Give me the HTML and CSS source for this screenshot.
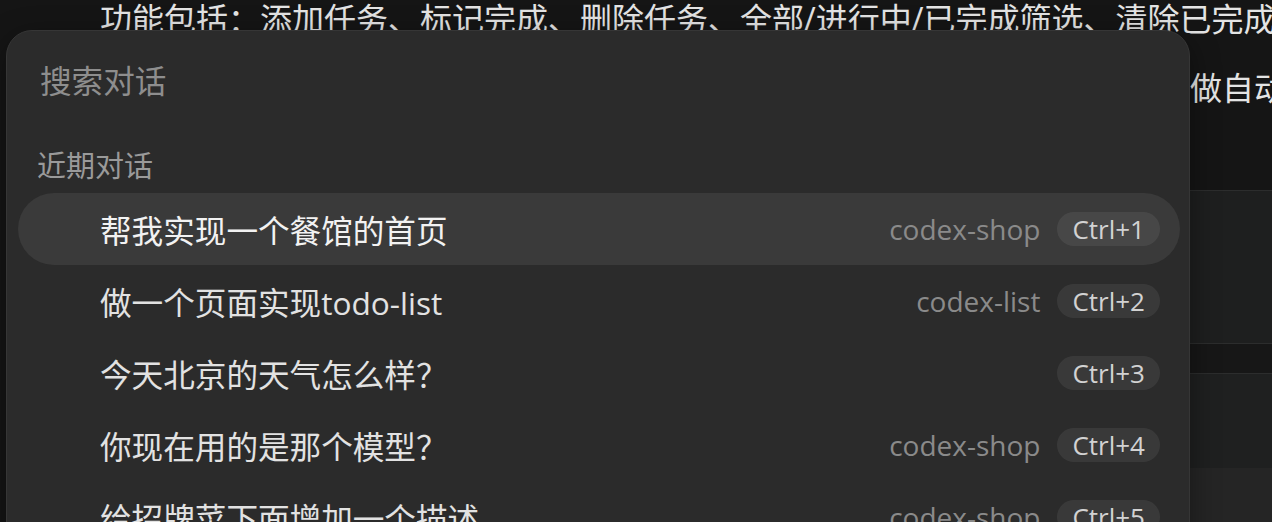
FILE: index.html
```html
<!DOCTYPE html>
<html lang="zh-CN">
<head>
  <meta charset="UTF-8">
  <meta name="viewport" content="width=device-width, initial-scale=1.0">
  <title>搜索对话</title>
  <link rel="stylesheet" href="styles.css">
</head>
<body>
  <!-- 对话内容（被弹窗遮住大部分） -->
  <div class="chat">
    <p class="line first">功能包括：添加任务、标记完成、删除任务、全部/进行中/已完成筛选、清除已完成</p>
    <p class="line second">界面采用深色主题，数据保存在本地存储中，刷新后任务不会丢失，并且可以做自动保存</p>
    <div class="block code"></div>
    <div class="block gap"></div>
    <div class="block code short"></div>
    <div class="block footer"></div>
  </div>

  <!-- 搜索对话弹窗 -->
  <div class="palette">
    <div class="search">搜索对话</div>
    <div class="group-title">近期对话</div>
    <ul class="list">
      <li class="item active">
        <span class="title">帮我实现一个餐馆的首页</span>
        <span class="project">codex-shop</span>
        <span class="key">Ctrl+1</span>
      </li>
      <li class="item">
        <span class="title">做一个页面实现todo-list</span>
        <span class="project">codex-list</span>
        <span class="key">Ctrl+2</span>
      </li>
      <li class="item">
        <span class="title">今天北京的天气怎么样<span class="q">？</span></span>
        <span class="key">Ctrl+3</span>
      </li>
      <li class="item">
        <span class="title">你现在用的是那个模型<span class="q">？</span></span>
        <span class="project">codex-shop</span>
        <span class="key">Ctrl+4</span>
      </li>
      <li class="item">
        <span class="title">给招牌菜下面增加一个描述</span>
        <span class="project">codex-shop</span>
        <span class="key">Ctrl+5</span>
      </li>
    </ul>
  </div>
</body>
</html>
```

FILE: styles.css
```css
html, body {
  margin: 0;
  padding: 0;
  height: 100%;
  overflow: hidden;
}
body {
  background-color: #151515;
  font-family: "Open Sans", "Noto Sans CJK SC", sans-serif;
  color: #e6e6e6;
  position: relative;
}

/* 背后的对话内容 */
.chat {
  padding-left: 100px;
  width: 1400px;
}
.line {
  margin: 0;
  font-size: 32px;
  line-height: 40px;
  white-space: nowrap;
  color: #e4e4e4;
}
.first {
  margin-top: -1px;
}
.second {
  margin-top: 29px;
  padding-left: 2px;
}
.block {
  border-top: 1px solid #2c2d2d;
}
.code {
  margin-top: 82px;
  height: 152px;
  background-color: #1e1f1f;
}
.gap {
  height: 29px;
  background-color: #171717;
}
.short {
  margin-top: 0;
  height: 94px;
  background-color: #1f2020;
}
.footer {
  height: 60px;
  border-top: 0;
  background-color: #252525;
}

/* 弹窗 */
.palette {
  position: absolute;
  left: 6px;
  top: 30px;
  width: 1184px;
  height: 560px;
  box-sizing: border-box;
  padding: 0 9px 0 11px;
  background-color: #2b2b2b;
  border: 1px solid #363636;
  border-radius: 26px;
  box-shadow: 0 8px 30px rgba(0, 0, 0, 0.4);
}
.search {
  height: 100px;
  line-height: 100px;
  padding-left: 22px;
  font-size: 31.6px;
  color: #8e8e8e;
}
.group-title {
  margin-top: 15px;
  padding-left: 19px;
  font-size: 29px;
  line-height: 40px;
  color: #9a9a9a;
}
.list {
  list-style: none;
  margin: 7px 0 0;
  padding: 0;
}
.item {
  display: flex;
  align-items: center;
  height: 72px;
  padding: 0 20px 0 82px;
  border-radius: 36px;
}
.item.active {
  background-color: #3a3a3a;
}
.title {
  flex: 1;
  font-size: 31.6px;
  color: #e2e2e2;
  white-space: nowrap;
}
/* 问号居中显示 */
.q {
  font-family: "Noto Sans CJK JP", sans-serif;
}
.active .title {
  color: #f2f2f2;
}
.project {
  font-size: 28px;
  color: #8a8a8a;
  margin-right: 17px;
}
.key {
  height: 34px;
  line-height: 34px;
  padding: 0 15px;
  border-radius: 17px;
  font-size: 26px;
  color: #d2d2d2;
  background-color: rgba(255, 255, 255, 0.07);
}
```
